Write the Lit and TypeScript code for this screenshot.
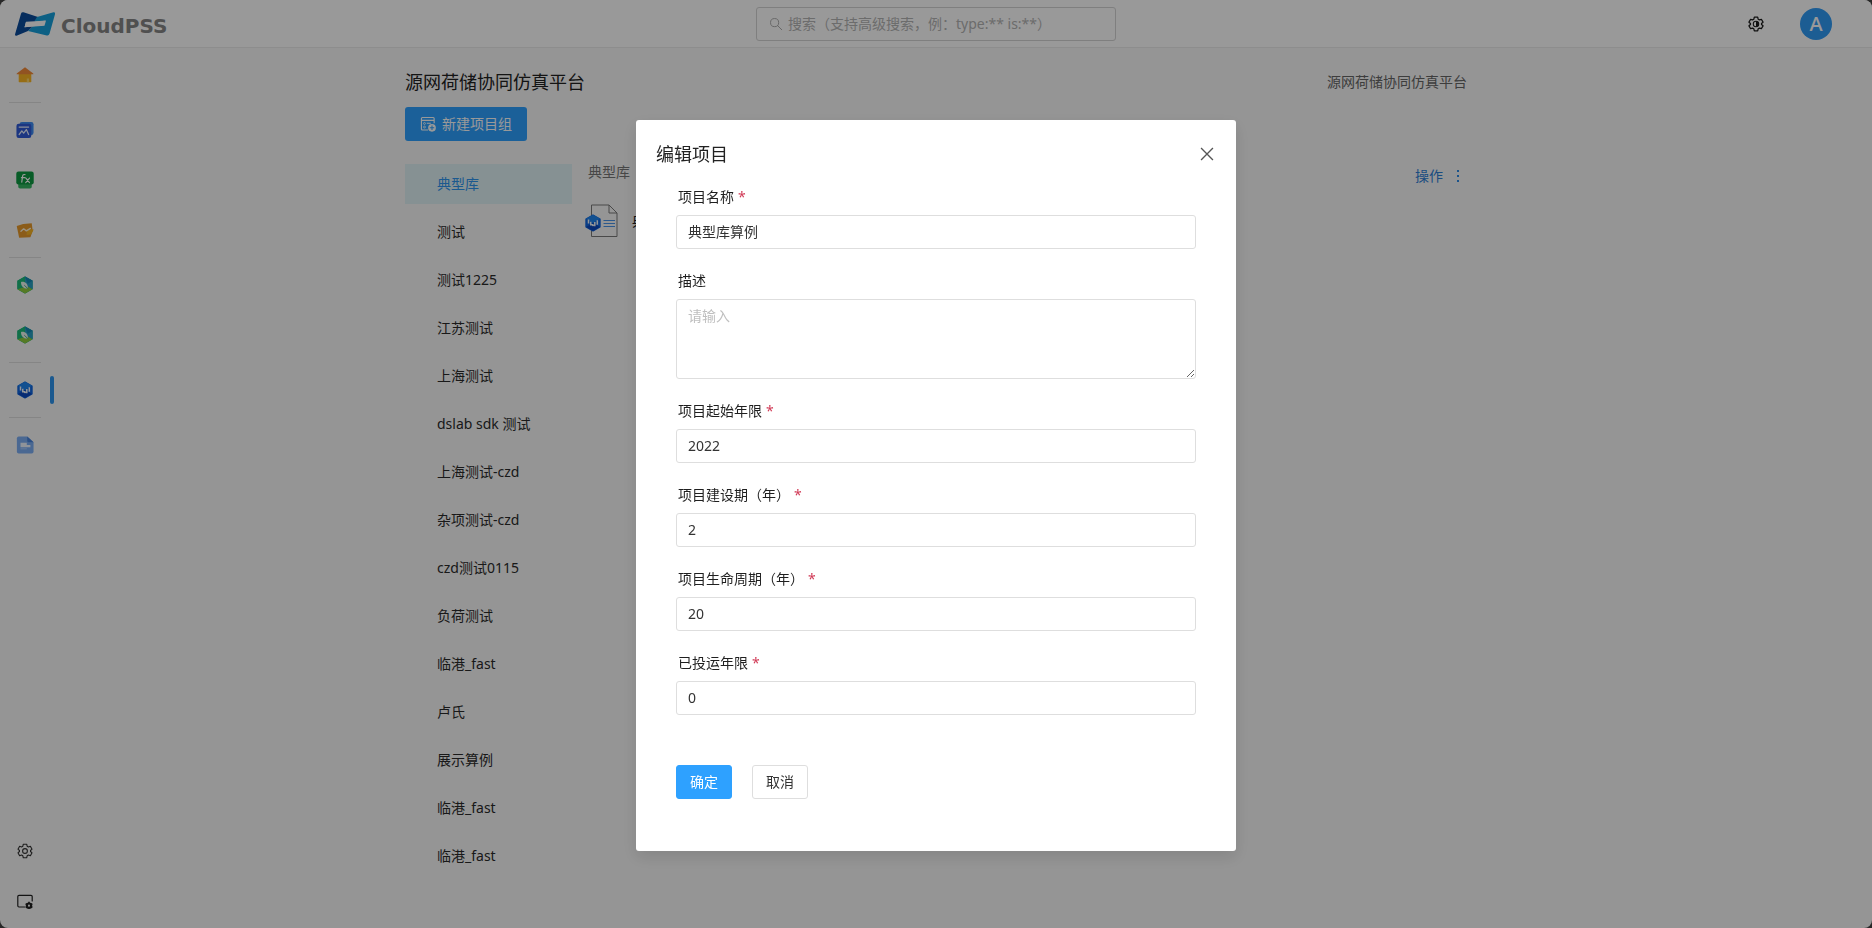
import { LitElement, html, css, svg, nothing } from "lit";
import { customElement, property, state } from "lit/decorators.js";
import { classMap } from "lit/directives/class-map.js";

const gearPath =
  "M7.9 1.5h4.2l.6 2.5 1.6.9 2.4-.8 2.1 3.6-1.9 1.7v1.2l1.9 1.7-2.1 3.6-2.4-.8-1.6.9-.6 2.5H7.900l-.6-2.500-1.600-.9-2.400.8-2.100-3.600 1.900-1.700V9.400l-1.900-1.700 2.100-3.600 2.400.8 1.600-.9z";

const hexPath = "M10 1.200 17.800 5.600v8.800L10 18.800 2.200 14.400V5.600z";

const leafHex = svg`
  <path d="${hexPath}" fill="#22b58c" stroke="#22b58c" stroke-width="1.500" stroke-linejoin="round" />
  <path d="M1.600 5.400 10 .5v9L3.500 15.300l-1.900-1z" fill="#1dbb78" />
  <path d="M10 .5 18.500 5.400v9.200L10 10z" fill="#2a9fc4" />
  <path d="M10 .5 18.500 5.400 13 8.500z" fill="#1689b4" />
  <path d="M1.700 14.700 10 19.500l8.300-4.800-6-3.200z" fill="#8fcb3e" />
  <path d="M5.600 6.600c4.600-.7 8 2.200 7.600 7.300-4.600.3-7.900-2.400-7.600-7.300z" fill="#edf5ee" />
  <path d="M9.200 10.200l4.400 4.200" stroke="#4aa88a" stroke-width="1.100" />`;

const blueHex = svg`
  <path d="${hexPath}" fill="#1268e0" stroke="#1268e0" stroke-width="1.500" stroke-linejoin="round" />
  <path d="M10 .8 17.800 5.200 10 10 2.200 5.200z" fill="#1e86f0" />
  <path d="M2.200 14.400 10 10l7.800 4.400L10 18.800z" fill="#0b48c0" />
  <path d="M5 6v4.500M7.500 8.500V12h2.500M12 9v4.500M14.800 7v5" fill="none" stroke="#f2f8ff" stroke-width="1.700" />
  <circle cx="10" cy="12.500" r="1.200" fill="#f2f8ff" />`;

const icons: Record<string, unknown> = {
  home: svg`
    <path d="M3 9h14v8.500q0 .5-.5.5h-13q-.5 0-.5-.5z" fill="#fbb623" />
    <path d="M10 1.500 19.200 8.200q.5.900-.5 1H1.300q-1-.1-.5-1z" fill="#f28a3a" />
    <path d="M12 14h2.500v4H12z" fill="#ffd66b" />`,
  model: svg`
    <rect x="4" y="1" width="15.500" height="14.500" rx="2.500" fill="#3f8cf2" />
    <rect x=".5" y="3" width="16.500" height="16" rx="2.500" fill="#2f5bd8" />
    <path d="M3.500 6.800h10.500M3.500 15l3-4 2 2.500 3-4 2.500 5.500" fill="none" stroke="#e6eeff" stroke-width="1.400" stroke-linecap="round" stroke-linejoin="round" />`,
  fx: svg`
    <rect x="2.500" y="9" width="15" height="10.500" rx="2" fill="#35b562" />
    <rect x=".3" y=".5" width="19.400" height="14.500" rx="2.500" fill="#0e9a42" />
    <path d="M10 4q-2.400-.6-2.700 2L6.400 12.300M6 7.300h4M11 7.800l4 5M15 7.800l-4.200 5" fill="none" stroke="#fff" stroke-width="1.300" stroke-linecap="round" />`,
  folder: svg`
    <path d="M.8 5.500 8 3.200 17.500 2.500 18.500 11l-2.500 7-12.500.6z" fill="#e89a2a" />
    <path d="M12.500 9l7.200.5-3 5.500-5 .5z" fill="#f7b423" />
    <path d="M5.500 11.500l3-2.800 3 2.300 4.500-2.800" fill="none" stroke="#fff3d8" stroke-width="1.500" stroke-linecap="round" stroke-linejoin="round" />`,
  leaf: leafHex,
  cube: blueHex,
  doc: svg`
    <path d="M3 .5h9.500L19.500 7v10.500q0 2-2 2H3q-2 0-2-2v-15q0-2 2-2z" fill="#7caef4" />
    <path d="M12.500.5 19.500 7H14q-1.500 0-1.500-1.500z" fill="#4683dc" />
    <path d="M5 7.500h7v2.500h4v2.500H5z" fill="#eef5ff" />
    <path d="M5 14.200h7" stroke="#a9ccfa" stroke-width="1.200" />`,
  gear: svg`
    <path d="${gearPath}" fill="none" stroke="#333" stroke-width="1.400" stroke-linejoin="round" />
    <circle cx="10" cy="10" r="3" fill="none" stroke="#333" stroke-width="1.400" />`,
  theme: svg`
    <path d="${gearPath}" fill="none" stroke="#1c1c1c" stroke-width="1.600" stroke-linejoin="round" />
    <circle cx="10" cy="10" r="3.400" fill="none" stroke="#1c1c1c" stroke-width="1.300" />
    <path d="M10 6.600a3.400 3.400 0 0 1 0 6.800z" fill="#1c1c1c" />`,
  screen: svg`
    <path d="M9.500 17.500H2.500q-1.500 0-1.500-1.500V4.500Q1 3 2.500 3h15Q19 3 19 4.500V10" fill="none" stroke="#222" stroke-width="1.500" stroke-linecap="round" />
    <circle cx="15" cy="15.800" r="2.700" fill="none" stroke="#222" stroke-width="2.600" />
    <path d="M15 11v9.600M10.800 13.400l8.400 4.800M19.200 13.400l-8.400 4.800" stroke="#222" stroke-width="2" />
    <circle cx="15" cy="15.800" r="1.300" fill="#f9f9f9" />`,
  search: svg`
    <circle cx="8" cy="8" r="5.800" fill="none" stroke="#a6a6a6" stroke-width="1.300" />
    <path d="M12.200 12.200l6 6" stroke="#a6a6a6" stroke-width="1.300" stroke-linecap="round" />`,
  group: svg`
    <path d="M10 17.500H3q-1.200 0-1.200-1.200V3Q1.800 1.800 3 1.800h13.500q1.200 0 1.200 1.200v6" fill="none" stroke="#fff" stroke-width="1.400" />
    <path d="M2 5.500h15.500M8.500 9h5" stroke="#fff" stroke-width="1.400" />
    <circle cx="5.600" cy="9.300" r="1.200" fill="none" stroke="#fff" />
    <circle cx="5.600" cy="13.800" r="1.200" fill="none" stroke="#fff" />
    <circle cx="15" cy="14.800" r="4.800" fill="#fff" />
    <path d="M15 12v5.600M12.200 14.800h5.600" stroke="#2ea1ff" stroke-width="1.300" />`,
  close: svg`<path d="M1.500 1.500l17 17M18.500 1.500 1.500 18.500" stroke="#555" stroke-width="1.900" />`,
};

const iconOf = (name: string, cls = "icon") =>
  html`<svg class=${cls} viewBox="0 0 20 20" aria-hidden="true">${icons[name]}</svg>`;

@customElement("side-nav")
class SideNav extends LitElement {
  static styles = css`
    :host { display: flex; flex-direction: column; justify-content: space-between; flex: none; width: 54px; padding: 2px 0; box-sizing: border-box; }
    .item { display: flex; align-items: center; width: 54px; height: 50px; }
    .cell { display: flex; justify-content: center; flex: 1; }
    .bar { width: 4px; height: 28px; border-radius: 2px; }
    .active .bar { background: #2e94ee; }
    .icon { display: block; width: 18px; height: 18px; }
    .small { display: block; width: 16px; height: 16px; }
    .line { width: 32px; height: 1px; margin: 2px 0 2px 9px; border: 0; background: #dedede; }
  `;

  link(name: string, label: string, active = false, cls = "icon") {
    return html`<a class=${classMap({ item: true, active })} href="#${label}" aria-label=${label}>
      <span class="cell">${iconOf(name, cls)}</span><span class="bar"></span>
    </a>`;
  }

  render() {
    return html`
      <nav>
        ${this.link("home", "home")}
        <hr class="line" />
        ${this.link("model", "model")}${this.link("fx", "function")}${this.link("folder", "apps")}
        <hr class="line" />
        ${this.link("leaf", "energy")}${this.link("leaf", "carbon")}
        <hr class="line" />
        ${this.link("cube", "platform", true)}
        <hr class="line" />
        ${this.link("doc", "documents")}
      </nav>
      <div>
        ${this.link("gear", "settings", false, "small")}
        ${this.link("screen", "display", false, "small")}
      </div>
    `;
  }
}

@customElement("form-field")
class FormField extends LitElement {
  @property() label = "";
  @property() value = "";
  @property() placeholder = "";
  @property({ type: Boolean }) required = false;
  @property({ type: Boolean }) multiline = false;

  static styles = css`
    :host { display: flex; flex-direction: column; }
    label { height: 36px; padding-left: 2px; line-height: 36px; color: #1f1f1f; }
    .star { margin-left: 4px; color: #d13a56; }
    .control { display: block; box-sizing: border-box; width: 100%; height: 34px; margin: 0; padding: 0 11px 2px; border: 1px solid #dedede; border-radius: 3px; background: #fff; color: #333; font: inherit; outline: none; }
    .control:focus { border-color: #2ea1ff; }
    .area { height: 80px; padding: 6px 11px; line-height: 20px; resize: vertical; }
    .control::placeholder { color: #bfbfbf; opacity: 1; }
  `;

  render() {
    return html`
      <label for="control">${this.label}${this.required ? html`<span class="star">*</span>` : nothing}</label>
      ${this.multiline
        ? html`<textarea id="control" class="control area" placeholder=${this.placeholder} .value=${this.value}></textarea>`
        : html`<input id="control" class="control" type="text" ?required=${this.required} .value=${this.value} />`}
    `;
  }
}

@customElement("app-root")
class AppRoot extends LitElement {
  @state() selected = 0;

  groups = [
    "典型库", "测试", "测试1225", "江苏测试", "上海测试", "dslab sdk 测试", "上海测试-czd", "杂项测试-czd",
    "czd测试0115", "负荷测试", "临港_fast", "卢氏", "展示算例", "临港_fast", "临港_fast",
  ];

  fields = [
    { label: "项目名称", value: "典型库算例", required: true },
    { label: "描述", placeholder: "请输入", multiline: true },
    { label: "项目起始年限", value: "2022", required: true },
    { label: "项目建设期（年）", value: "2", required: true },
    { label: "项目生命周期（年）", value: "20", required: true },
    { label: "已投运年限", value: "0", required: true },
  ];

  static styles = css`
    :host { display: block; min-height: 100vh; background: #444; font: 14px/20px "Noto Sans", "Noto Sans CJK SC", sans-serif; color: #333; }
    button { margin: 0; padding: 0; border: 0; background: none; font: inherit; color: inherit; cursor: pointer; }
    a { text-decoration: none; color: inherit; }
    .page { display: flex; flex-direction: column; min-height: 100vh; border-radius: 8px; background: #f9f9f9; overflow: hidden; }
    .top { display: grid; grid-template-columns: 1fr 360px 1fr; align-items: center; box-sizing: border-box; height: 48px; border-bottom: 1px solid #ececec; background: #fff; }
    .brand { display: flex; align-items: center; gap: 6px; padding-left: 15px; }
    .mark { width: 40px; height: 24px; }
    .word { padding-top: 4px; font: bold 20px/24px "DejaVu Sans", sans-serif; color: #858585; }
    .search { display: flex; align-items: center; gap: 5px; box-sizing: border-box; height: 34px; padding: 0 12px; border: 1px solid #d4d4d4; border-radius: 3px; }
    .search-icon { flex: none; width: 14px; height: 14px; }
    .query { flex: 1; min-width: 0; padding: 0; border: 0; background: none; font: inherit; outline: none; }
    .query::placeholder { color: #b4b4b4; opacity: 1; }
    .tools { display: flex; align-items: center; justify-content: flex-end; gap: 36px; padding-right: 40px; }
    .icon { display: block; width: 16px; height: 16px; }
    .avatar { width: 32px; height: 32px; border-radius: 50%; background: #2f9bf5; color: #fff; font-size: 20px; font-weight: 500; line-height: 32px; text-align: center; }
    .body { display: flex; flex: 1; }
    .main { flex: 1; padding: 20px 54px 20px 0; }
    .content { max-width: 1062px; margin: 0 auto; }
    .heading { display: flex; align-items: center; justify-content: space-between; height: 28px; margin-bottom: 11px; }
    h1 { margin: 0; font-size: 18px; line-height: 28px; font-weight: 400; color: #222; }
    .platform { color: #666; }
    .create { display: flex; align-items: center; gap: 6px; height: 34px; padding: 0 15px; border-radius: 3px; background: #2ea1ff; color: #fff; }
    .columns { display: grid; grid-template-columns: 167px 1fr; gap: 13px; margin-top: 23px; }
    .groups { display: flex; flex-direction: column; gap: 8px; }
    .group { height: 40px; padding-left: 32px; text-align: left; color: #2b2b2b; }
    .group.on { background: #e0f2f5; color: #2e94ee; }
    .crumb { height: 16px; padding-left: 3px; line-height: 16px; color: #777; }
    .files { display: flex; flex-direction: column; gap: 16px; }
    .filebar { display: flex; justify-content: space-between; }
    .ops { display: flex; gap: 10px; height: 24px; line-height: 24px; color: #2e7fd6; }
    .dots { width: 4px; height: 24px; margin: 0 7px 0 3px; }
    .file { display: flex; align-items: center; gap: 14px; color: #222; }
    .sheet { width: 33px; height: 34px; }
    .overlay { position: fixed; inset: 0; display: flex; align-items: flex-start; justify-content: center; padding-top: 120px; background: rgba(0, 0, 0, 0.4); overflow: auto; }
    .modal { width: 600px; border-radius: 3px; background: #fff; box-shadow: 0 6px 16px rgba(0, 0, 0, 0.12); }
    .modal-head { display: flex; align-items: center; justify-content: space-between; height: 28px; padding: 20px 20px 11px; }
    h2 { margin: 0; font-size: 18px; line-height: 28px; font-weight: 400; color: #222; }
    .close { display: grid; place-items: center; width: 18px; height: 18px; }
    .cross { width: 14px; height: 14px; }
    .form { display: flex; flex-direction: column; gap: 14px; padding: 0 40px 52px; }
    .actions { display: flex; gap: 20px; padding-top: 36px; }
    .btn { box-sizing: border-box; width: 56px; height: 34px; border: 1px solid #dedede; border-radius: 3px; background: #fff; }
    .btn.ok { border-color: #2ea1ff; background: #2ea1ff; color: #fff; }
  `;

  renderTop() {
    return html`<header class="top">
      <a class="brand" href="#home">
        <svg class="mark" viewBox="0 0 40 22" preserveAspectRatio="none" aria-hidden="true">
          <path d="M8.500.3 23 4.500 20 9 11 9 9.500 14 18 13 13 17.500 1.500 21.800Q-.5 22 .2 20L6 1.500Q6.700-.2 8.500.3z" fill="#0b4c9c" />
          <path d="M22 4.500 38.500.2Q40.500 0 40 2L34.500 20q-.8 2-2.700 1.500L13 17.500l5-4.500 10.500-.8L30 8 19 9z" fill="#17a0dc" />
          <path d="M11 9.200 31 7.800l-1.500 4.700L9.500 14z" fill="#fff" />
        </svg>
        <span class="word">CloudPSS</span>
      </a>
      <div class="search">
        ${iconOf("search", "search-icon")}
        <input class="query" type="search" aria-label="搜索" placeholder="搜索（支持高级搜索，例：type:** is:**）" />
      </div>
      <div class="tools">
        <button aria-label="theme">${iconOf("theme")}</button>
        <button class="avatar">A</button>
      </div>
    </header>`;
  }

  renderFiles() {
    return html`<section class="files">
      <div class="filebar">
        <div class="crumb">典型库</div>
        <button class="ops">操作
          <svg class="dots" viewBox="0 0 4 24" aria-hidden="true">
            <path d="M1 6h2v2H1zM1 11h2v2H1zM1 16h2v2H1z" fill="#2e8be6" />
          </svg>
        </button>
      </div>
      <a class="file" href="#project">
        <svg class="sheet" viewBox="0 0 33 34" aria-hidden="true">
          <path d="M6.500 1h17.500l8 8v23.500H6.500z" fill="#f9f9f9" stroke="#7a7a7a" />
          <path d="M24 1v8h8" fill="none" stroke="#7a7a7a" />
          <path d="M18.500 16.500h11.500M18.500 19.500h11.500M18.500 22.500h11.500" stroke="#4a94ea" stroke-width="1.200" />
          <svg x="-1" y="10" width="18" height="18" viewBox="0 0 20 20">${blueHex}</svg>
        </svg>
        典型库算例
      </a>
    </section>`;
  }

  renderDialog() {
    return html`<div class="overlay">
      <div class="modal" role="dialog" aria-modal="true" aria-labelledby="dialog-title">
        <div class="modal-head">
          <h2 id="dialog-title">编辑项目</h2>
          <button class="close" aria-label="close">${iconOf("close", "cross")}</button>
        </div>
        <form class="form" @submit=${(e: Event) => e.preventDefault()}>
          ${this.fields.map(
            (f) => html`<form-field
              .label=${f.label}
              .value=${f.value ?? ""}
              .placeholder=${f.placeholder ?? ""}
              .required=${!!f.required}
              .multiline=${!!f.multiline}
            ></form-field>`
          )}
          <div class="actions">
            <button class="btn ok" type="submit">确定</button>
            <button class="btn" type="button">取消</button>
          </div>
        </form>
      </div>
    </div>`;
  }

  render() {
    return html`
      <div class="page">
        ${this.renderTop()}
        <div class="body">
          <side-nav></side-nav>
          <main class="main">
            <div class="content">
              <div class="heading">
                <h1>源网荷储协同仿真平台</h1>
                <span class="platform">源网荷储协同仿真平台</span>
              </div>
              <button class="create">${iconOf("group")}新建项目组</button>
              <div class="columns">
                <div class="groups">
                  ${this.groups.map(
                    (g, i) => html`<button
                      class=${classMap({ group: true, on: i === this.selected })}
                      @click=${() => (this.selected = i)}
                    >${g}</button>`
                  )}
                </div>
                ${this.renderFiles()}
              </div>
            </div>
          </main>
        </div>
      </div>
      ${this.renderDialog()}
    `;
  }
}
